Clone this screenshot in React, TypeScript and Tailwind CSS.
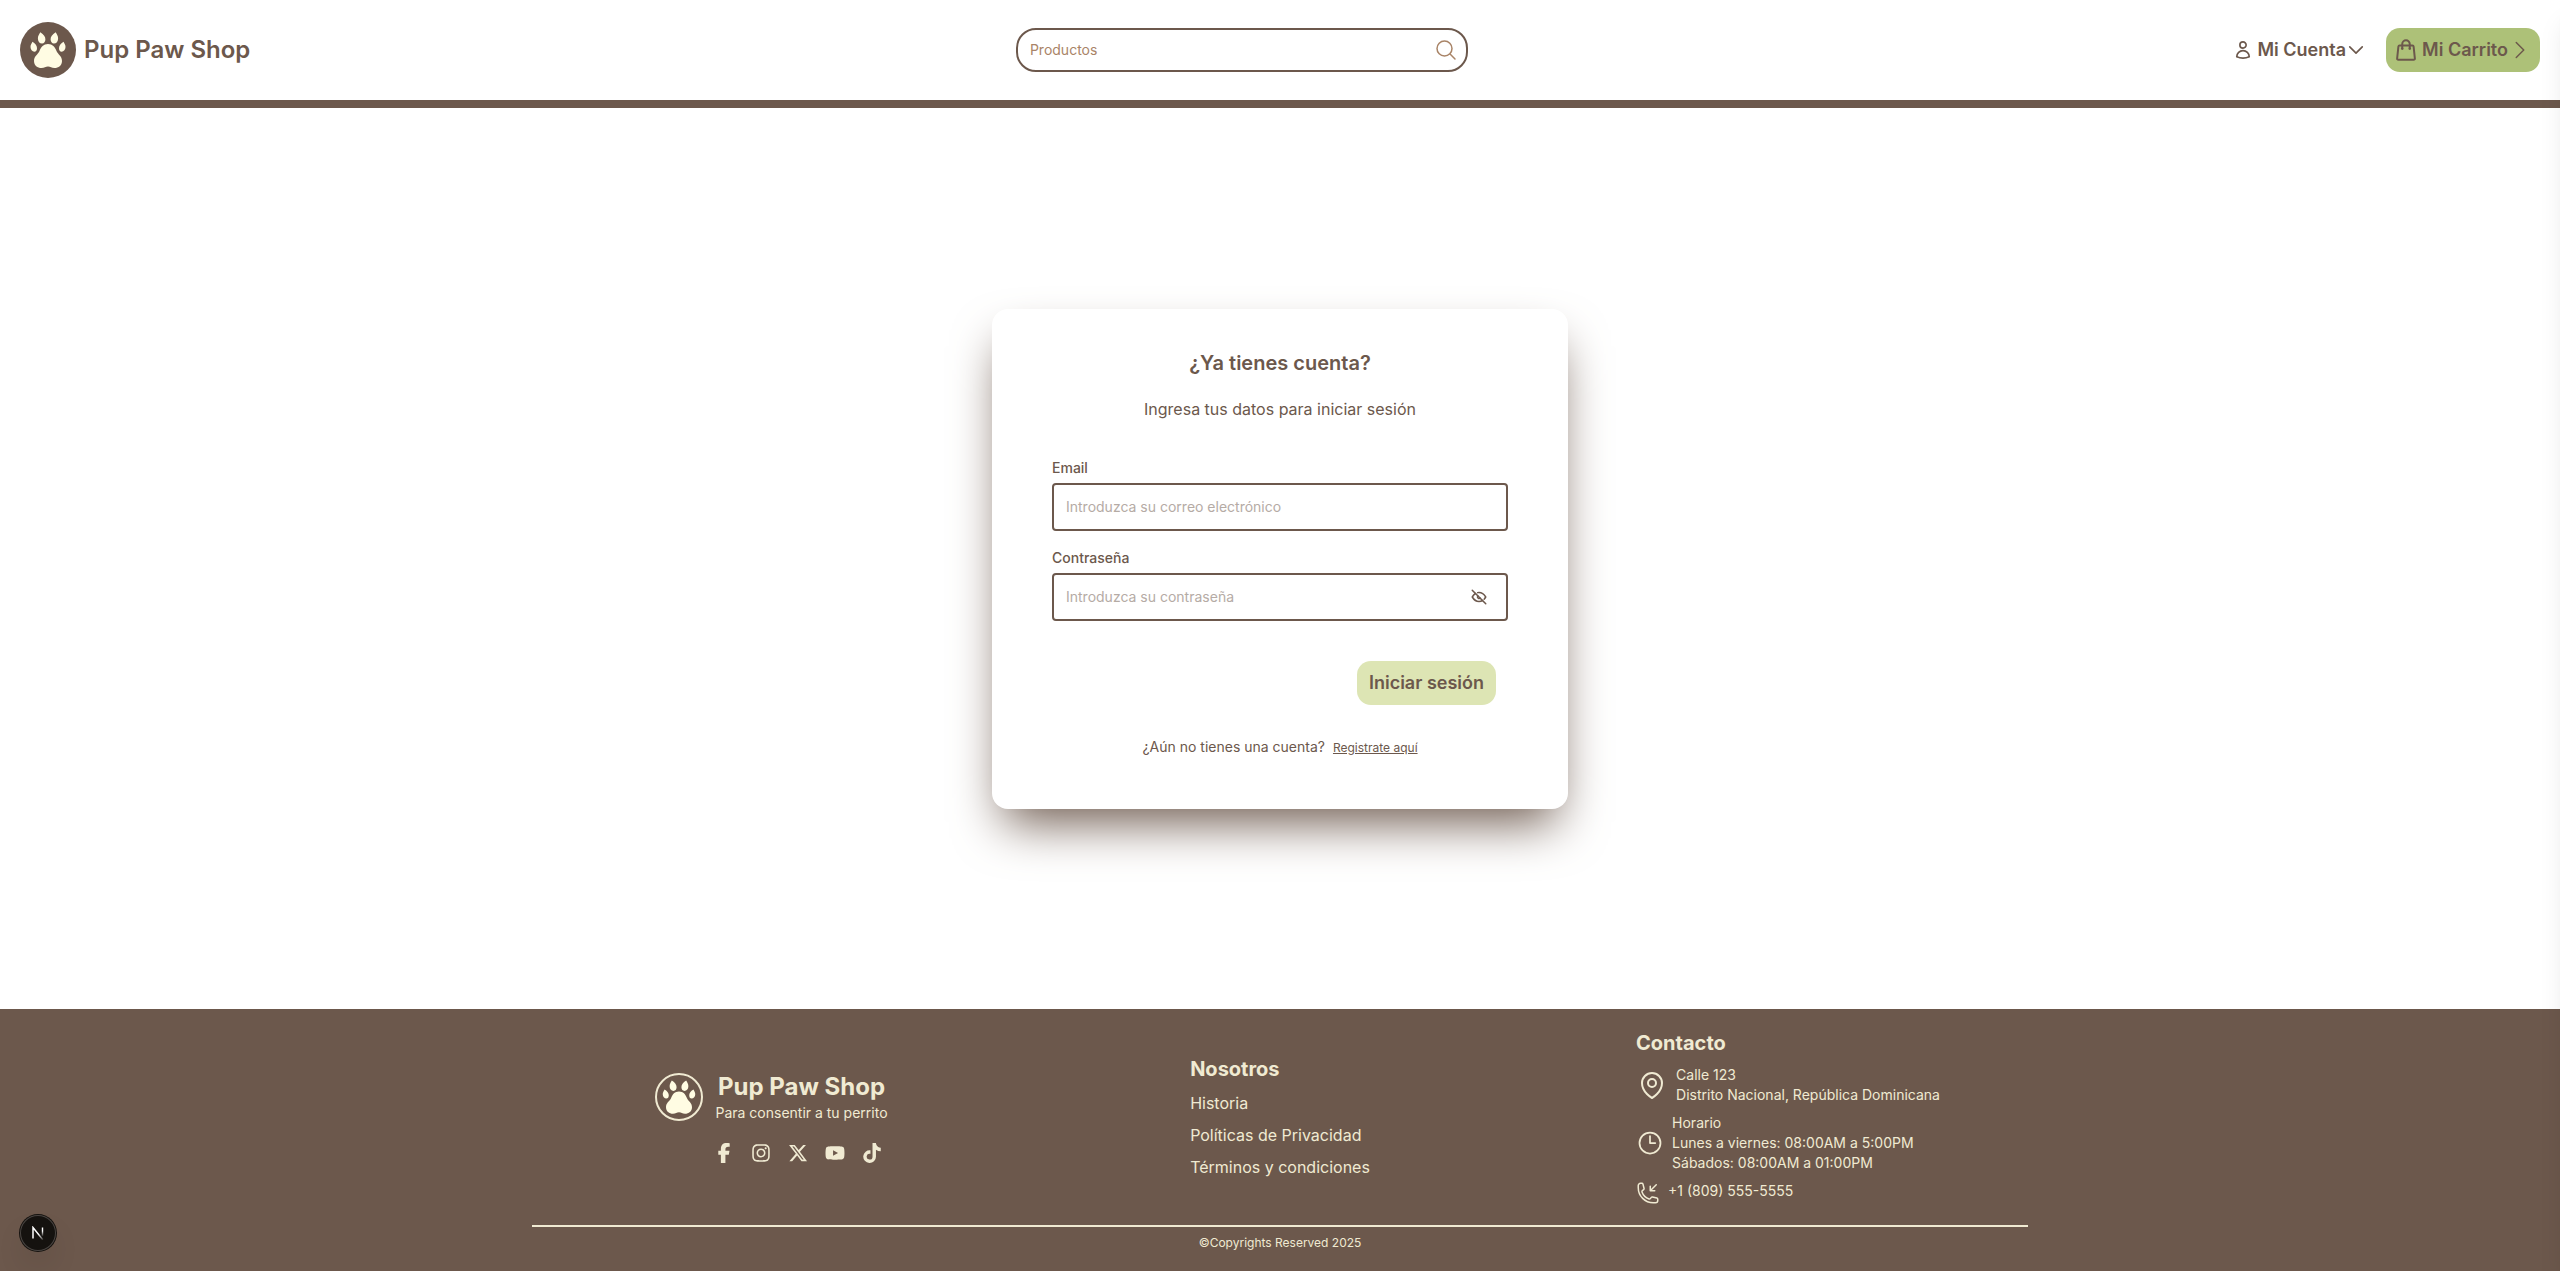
import React from "react";
import {
  HiOutlineUser,
  HiOutlineShoppingBag,
  HiOutlineChevronDown,
  HiOutlineChevronRight,
  HiOutlineMagnifyingGlass,
  HiOutlineMapPin,
  HiOutlineClock,
  HiOutlinePhoneArrowDownLeft,
} from "react-icons/hi2";
import { FaFacebookF, FaInstagram, FaXTwitter, FaYoutube, FaTiktok } from "react-icons/fa6";
import { TbEyeOff } from "react-icons/tb";

function Paw({ className }: { className: string }) {
  return (
    <svg viewBox="0 0 56 56" className={className} fill="#fffce3" aria-hidden="true">
      <path d="M28 22c4.500 0 7 3 8.500 7 1.500 3.500 5.500 5 5.500 10 0 4.500-3.500 7-7.500 7-3 0-4-1.500-6.500-1.500s-3.500 1.500-6.500 1.500c-4 0-7.500-2.500-7.500-7 0-5 4-6.500 5.500-10C21 25 23.500 22 28 22z" />
      <path d="M20.300 10.300c3.500 2.200 5.200 4.600 5.100 7.300-.1 2.400-1.300 3.900-3.300 3.900-2.500 0-4.200-2-4.200-5 0-2.300.9-3.700 2.400-6.200z" />
      <path d="M35.700 10.300c-3.500 2.200-5.200 4.600-5.100 7.300.1 2.400 1.300 3.900 3.300 3.900 2.500 0 4.200-2 4.200-5 0-2.300-.9-3.700-2.400-6.200z" />
      <path d="M12.500 19.800c3 1.700 4.500 4 4.500 6.400 0 2.200-1 3.500-2.600 3.500-2.200 0-3.900-2-3.900-4.700 0-1.900.8-3.200 2-5.200z" />
      <path d="M43.500 19.800c-3 1.700-4.500 4-4.500 6.400 0 2.200 1 3.500 2.600 3.500 2.200 0 3.900-2 3.900-4.700 0-1.900-.8-3.200-2-5.200z" />
    </svg>
  );
}

function Header() {
  return (
    <header className="flex items-center justify-between border-b-8 border-[#6c584c] px-5 py-[22px]">
      <a href="#" className="flex items-center gap-2">
        <span className="rounded-full bg-[#6c584c]">
          <Paw className="size-14" />
        </span>
        <span className="text-2xl font-semibold">Pup Paw Shop</span>
      </a>
      <form className="flex h-11 w-[452px] items-center rounded-[20px] border-2 border-[#6c584c] pr-2 pl-3 text-[#a98467]">
        <input
          type="text"
          aria-label="Productos"
          placeholder="Productos"
          className="min-w-0 flex-1 text-sm outline-none placeholder:text-[#a98467]"
        />
        <button type="button" aria-label="Buscar">
          <HiOutlineMagnifyingGlass className="size-6" />
        </button>
      </form>
      <div className="flex items-center gap-5">
        <button type="button" className="flex items-center gap-1 text-lg font-semibold">
          <HiOutlineUser className="size-5" strokeWidth={2} />
          <span className="flex items-center">
            Mi Cuenta
            <HiOutlineChevronDown className="size-5" strokeWidth={2} />
          </span>
        </button>
        <button
          type="button"
          className="flex h-11 items-center gap-1 rounded-[14px] bg-[#adc178] px-2 text-lg font-semibold"
        >
          <HiOutlineShoppingBag className="size-6" strokeWidth={2} />
          <span className="flex items-center">
            Mi Carrito
            <HiOutlineChevronRight className="size-6" />
          </span>
        </button>
      </div>
    </header>
  );
}

const labelClass = "block pb-[5px] text-sm font-medium";
const inputClass =
  "block h-12 w-full rounded-sm border-2 border-[#6c584c] px-3 text-sm outline-none placeholder:text-[#b5aba5]";

function LoginCard() {
  return (
    <section className="w-full max-w-xl rounded-2xl bg-white px-[60px] pt-10 pb-[52px] shadow-[0_25px_50px_-12px_#6c584c]">
      <h1 className="text-center text-xl leading-7 font-semibold">¿Ya tienes cuenta?</h1>
      <p className="mt-5 text-center leading-6">Ingresa tus datos para iniciar sesión</p>
      <form className="mt-[37px]">
        <label htmlFor="email" className={labelClass}>
          Email
        </label>
        <input id="email" type="email" placeholder="Introduzca su correo electrónico" className={inputClass} />
        <div className="mt-[17px]">
          <label htmlFor="password" className={labelClass}>
            Contraseña
          </label>
          <div className="relative">
            <input id="password" type="password" placeholder="Introduzca su contraseña" className={inputClass} />
            <button type="button" aria-label="Mostrar contraseña" className="absolute inset-y-0 right-5">
              <TbEyeOff className="size-[18px]" />
            </button>
          </div>
        </div>
        <div className="mt-10 flex justify-end pr-3">
          <button type="button" className="h-11 rounded-[14px] bg-[#dde5b4] px-3 text-lg font-semibold">
            Iniciar sesión
          </button>
        </div>
      </form>
      <p className="mt-8 flex items-baseline justify-center gap-2 text-sm">
        ¿Aún no tienes una cuenta?
        <a href="#" className="text-xs underline">
          Registrate aquí
        </a>
      </p>
    </section>
  );
}

const socials = [
  { name: "Facebook", Icon: FaFacebookF },
  { name: "Instagram", Icon: FaInstagram },
  { name: "X", Icon: FaXTwitter },
  { name: "YouTube", Icon: FaYoutube },
  { name: "TikTok", Icon: FaTiktok },
];

function Footer() {
  return (
    <footer className="bg-[#6c584c] text-[#f0ead2]">
      <div className="mx-auto max-w-[1536px] px-5 py-5">
        <div className="grid grid-cols-3 items-center justify-items-center gap-7 pb-5">
          <div className="flex gap-[11px]">
            <span className="mt-0.5 flex size-12 items-center justify-center rounded-full border-2 border-[#f0ead2]">
              <Paw className="size-[52px] shrink-0" />
            </span>
            <div className="text-center">
              <p className="text-2xl leading-8 font-bold">Pup Paw Shop</p>
              <p className="text-sm">Para consentir a tu perrito</p>
              <div className="mt-5 flex justify-center gap-[17px] pr-2">
                {socials.map(({ name, Icon }) => (
                  <a key={name} href="#" aria-label={name}>
                    <Icon className="size-5" />
                  </a>
                ))}
              </div>
            </div>
          </div>
          <nav className="flex flex-col gap-2">
            <h2 className="text-xl leading-7 font-bold">Nosotros</h2>
            <a href="#">Historia</a>
            <a href="#">Políticas de Privacidad</a>
            <a href="#">Términos y condiciones</a>
          </nav>
          <address className="flex flex-col gap-2 text-sm not-italic">
            <h2 className="text-xl leading-7 font-bold">Contacto</h2>
            <div className="flex items-center gap-2">
              <HiOutlineMapPin className="size-8" />
              <p>
                Calle 123
                <br />
                Distrito Nacional, República Dominicana
              </p>
            </div>
            <div className="flex items-center gap-2">
              <HiOutlineClock className="size-7" />
              <p>
                Horario
                <br />
                Lunes a viernes: 08:00AM a 5:00PM
                <br />
                Sábados: 08:00AM a 01:00PM
              </p>
            </div>
            <div className="flex gap-2">
              <HiOutlinePhoneArrowDownLeft className="size-6" />
              <p>+1 (809) 555-5555</p>
            </div>
          </address>
        </div>
        <p className="border-t-2 border-[#f0ead2] pt-2 text-center text-xs">©Copyrights Reserved 2025</p>
      </div>
    </footer>
  );
}

function DevBadge() {
  return (
    <button
      type="button"
      aria-label="Open dev tools"
      className="fixed bottom-5 left-5 flex size-9 items-center justify-center rounded-full bg-[#15120f] shadow-[0_0_0_1px_#15120f,inset_0_0_0_1px_#4a4542,0_16px_32px_-8px_rgba(0,0,0,0.24)]"
    >
      <svg viewBox="0 0 14 14" className="size-3.5" fill="none" aria-hidden="true">
        <defs>
          <linearGradient id="stem" x1="0" y1="0" x2="0" y2="1">
            <stop offset="0.400" stopColor="#fff" />
            <stop offset="1" stopColor="#fff" stopOpacity="0" />
          </linearGradient>
          <linearGradient id="diagonal" gradientUnits="userSpaceOnUse" x1="8" y1="8" x2="12.500" y2="14">
            <stop offset="0" stopColor="#fff" />
            <stop offset="1" stopColor="#fff" stopOpacity="0.100" />
          </linearGradient>
        </defs>
        <path d="M2 12.500V1.500L11.800 13.600" stroke="url(#diagonal)" strokeWidth="1.500" />
        <rect x="10.800" y="1.500" width="1.400" height="9" fill="url(#stem)" />
      </svg>
    </button>
  );
}

export default function App() {
  return (
    <div className="flex min-h-screen flex-col bg-white font-['Inter',sans-serif] text-[#6c584c]">
      <Header />
      <main className="flex flex-1 items-center justify-center">
        <LoginCard />
      </main>
      <Footer />
      <aside aria-hidden="true" className="fixed inset-y-0 left-full w-96 bg-white shadow-xl" />
      <DevBadge />
    </div>
  );
}
